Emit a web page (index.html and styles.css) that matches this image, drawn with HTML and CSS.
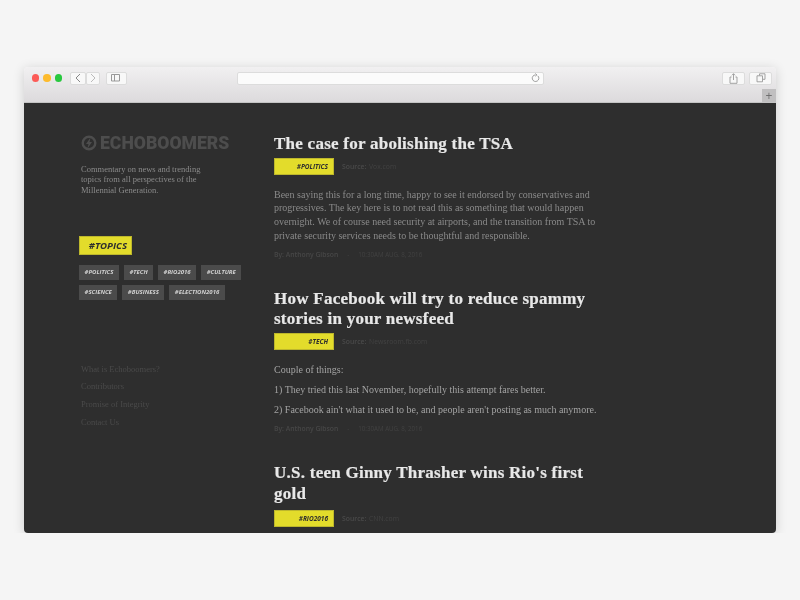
FILE: index.html
```html
<!DOCTYPE html>
<html lang="en">
<head>
    <meta charset="UTF-8">
    <title>Echoboomers</title>
    <link rel="stylesheet" href="styles.css">
</head>
<body>
    <div class="window">
        <div class="toolbar">
            <div class="toolbar-row">
                <div class="lights">
                    <span class="light red"></span>
                    <span class="light yellow"></span>
                    <span class="light green"></span>
                </div>
                <div class="btn-pair">
                    <div class="tool-btn back-btn">
                        <svg width="8" height="10" viewBox="0 0 8 10"><path d="M6 1 2 5l4 4" fill="none" stroke="#888" stroke-width="1"/></svg>
                    </div>
                    <div class="tool-btn forward-btn">
                        <svg width="8" height="10" viewBox="0 0 8 10"><path d="M2 1l4 4-4 4" fill="none" stroke="#bbb" stroke-width="1"/></svg>
                    </div>
                </div>
                <div class="tool-btn sidebar-btn">
                    <svg width="10" height="8" viewBox="0 0 10 8"><path d="M.5.5h8v6.500h-8zM3.500.5v6.500" fill="none" stroke="#999"/></svg>
                </div>
                <div class="address">
                    <svg width="9" height="10" viewBox="0 0 9 10"><path d="M6.800 2.800a3.300 3.300 0 1 1-2.300-.9M4.300.5l1.600 1.400-1.600 1.300" fill="none" stroke="#888" stroke-width=".8"/></svg>
                </div>
                <div class="tool-btn wide-btn">
                    <svg width="9" height="11" viewBox="0 0 9 11"><path d="M2.500 4H1v6.300h7V4H6.500M4.500 7V.8M2.900 2.300 4.500.7l1.600 1.600" fill="none" stroke="#999" stroke-width=".9"/></svg>
                </div>
                <div class="tool-btn wide-btn">
                    <svg width="10" height="10" viewBox="0 0 10 10"><path d="M3.500 2.500V.8h5.500v5.500H7M1 2.800h5.500v6H1z" fill="none" stroke="#999" stroke-width=".9"/></svg>
                </div>
            </div>
            <div class="tab-row">
                <div class="new-tab">+</div>
            </div>
        </div>

        <div class="page">
            <aside class="sidebar">
                <div class="logo">
                    <svg width="16" height="16" viewBox="0 0 16 16"><circle cx="8" cy="8" r="6.300" fill="none" stroke="#4d4d4d" stroke-width="2.400"/><path d="M9.500 2.500 5 9h2.500l-1 4.500L11 7H8.500z" fill="#4d4d4d"/></svg>
                    <span class="logo-text">ECHOBOOMERS</span>
                </div>
                <p class="tagline">Commentary on news and trending topics from all perspectives of the Millennial Generation.</p>
                <div class="topics-label">#TOPICS</div>
                <div class="topic-list">
                    <span class="topic">#POLITICS</span>
                    <span class="topic">#TECH</span>
                    <span class="topic">#RIO2016</span>
                    <span class="topic">#CULTURE</span>
                    <span class="topic">#SCIENCE</span>
                    <span class="topic">#BUSINESS</span>
                    <span class="topic">#ELECTION2016</span>
                </div>
                <ul class="side-links">
                    <li>What is Echoboomers?</li>
                    <li>Contributors</li>
                    <li>Promise of Integrity</li>
                    <li>Contact Us</li>
                </ul>
            </aside>

            <main class="feed">
                <article class="post">
                    <h2>The case for abolishing the TSA</h2>
                    <div class="post-meta">
                        <span class="post-tag">#POLITICS</span>
                        <span class="source"><b>Source:</b> Vox.com</span>
                    </div>
                    <div class="post-body">
                        <p>Been saying this for a long time, happy to see it endorsed by conservatives and progressives. The key here is to not read this as something that would happen overnight. We of course need security at airports, and the transition from TSA to private security services needs to be thoughtful and responsible.</p>
                    </div>
                    <div class="byline"><b>By: Anthony Gibson</b><i>-</i>10:30AM AUG. 8, 2016</div>
                </article>

                <article class="post">
                    <h2>How Facebook will try to reduce spammy stories in your newsfeed</h2>
                    <div class="post-meta">
                        <span class="post-tag">#TECH</span>
                        <span class="source"><b>Source:</b> Newsroom.fb.com</span>
                    </div>
                    <div class="post-body post-body-light">
                        <p>Couple of things:</p>
                        <p>1) They tried this last November, hopefully this attempt fares better.</p>
                        <p>2) Facebook ain't what it used to be, and people aren't posting as much anymore.</p>
                    </div>
                    <div class="byline"><b>By: Anthony Gibson</b><i>-</i>10:30AM AUG. 8, 2016</div>
                </article>

                <article class="post">
                    <h2>U.S. teen Ginny Thrasher wins Rio's first gold</h2>
                    <div class="post-meta">
                        <span class="post-tag">#RIO2016</span>
                        <span class="source"><b>Source:</b> CNN.com</span>
                    </div>
                </article>
            </main>
        </div>
    </div>
</body>
</html>
```

FILE: styles.css
```css
body {
    margin: 0;
    background-color: #f5f5f5;
    font-family: "Open Sans", sans-serif;
}
.window {
    width: 752px;
    height: 466px;
    margin: 67px auto 0;
    border-radius: 4px;
    overflow: hidden;
    box-shadow: 0 2px 12px rgba(0, 0, 0, 0.16);
    display: flex;
    flex-direction: column;
    filter: blur(0.3px);
}

/* browser chrome */
.toolbar {
    height: 36px;
    flex-shrink: 0;
    background: linear-gradient(#f1f0f1, #dcdadc);
    border-bottom: 1px solid #c4c4c4;
    box-sizing: border-box;
}
.toolbar-row {
    display: flex;
    align-items: center;
    height: 22px;
    padding-left: 7.500px;
}
.lights {
    display: flex;
    gap: 4px;
    margin-right: 7.500px;
}
.light {
    width: 7.500px;
    height: 7.500px;
    border-radius: 50%;
}
.red { background-color: #fc5b57; }
.yellow { background-color: #fdbb2e; }
.green { background-color: #28c83f; }
.btn-pair {
    display: flex;
    margin-right: 6px;
}
.tool-btn {
    display: flex;
    align-items: center;
    justify-content: center;
    height: 13px;
    box-sizing: border-box;
    background-color: #f8f8f8;
    border: 1px solid #dcdcdc;
    border-radius: 2px;
}
.back-btn { width: 16px; }
.forward-btn { width: 14px; }
.sidebar-btn { width: 22px; }
.wide-btn {
    width: 23px;
    margin-right: 4px;
}
.address {
    display: flex;
    align-items: center;
    justify-content: flex-end;
    width: 308px;
    height: 13px;
    box-sizing: border-box;
    margin-left: 110px;
    margin-right: 178px;
    padding-right: 3px;
    background-color: #fbfbfb;
    border: 1px solid #dcdcdc;
    border-radius: 2px;
}
.tab-row {
    display: flex;
    justify-content: flex-end;
    height: 13px;
}
.new-tab {
    width: 14px;
    height: 13px;
    background-color: #c0bfc0;
    color: #6f6f6f;
    font-size: 12px;
    line-height: 13px;
    text-align: center;
}

/* page */
.page {
    flex: 1;
    display: flex;
    background-color: #2e2e2e;
    overflow: hidden;
}
.sidebar {
    width: 250px;
    flex-shrink: 0;
    padding: 30.500px 0 0 55px;
    box-sizing: border-box;
}
.logo {
    display: flex;
    align-items: center;
    gap: 3px;
    margin-left: 2px;
    height: 18px;
}
.logo-text {
    font-family: Roboto, "Liberation Sans", sans-serif;
    font-weight: 900;
    font-size: 17.600px;
    color: #4d4d4d;
}
.tagline {
    width: 135px;
    margin: 12px 0 0 2px;
    font-family: "Liberation Serif", serif;
    font-size: 8.500px;
    line-height: 10.500px;
    color: #8a8a8a;
}
.topics-label {
    width: 53px;
    height: 19px;
    margin-top: 40.500px;
    box-sizing: border-box;
    padding-right: 4px;
    background-color: #e3dc2b;
    border: 1px solid #bdb72c;
    color: #2e2e2e;
    font-weight: bold;
    font-style: italic;
    font-size: 9.600px;
    line-height: 17px;
    text-align: right;
}
.topic-list {
    display: flex;
    flex-wrap: wrap;
    gap: 5px;
    margin-top: 10px;
    width: 170px;
}
.topic {
    height: 15px;
    padding: 0 5.500px;
    background-color: #4b4b4b;
    color: #d0d0d0;
    font-weight: bold;
    font-style: italic;
    font-size: 6px;
    line-height: 15px;
}
.side-links {
    list-style: none;
    margin: 61px 0 0 2px;
    padding: 0;
    font-family: "Liberation Serif", serif;
    font-size: 8.500px;
    line-height: 17.700px;
    color: #4a4a4a;
}
.feed {
    width: 325px;
    padding-top: 31px;
}
.post {
    margin-bottom: 30px;
}
.post h2 {
    margin: 0;
    font-family: "Liberation Serif", serif;
    font-weight: bold;
    font-size: 17px;
    line-height: 20.500px;
    letter-spacing: 0.250px;
    color: #e8e8e8;
    -webkit-text-stroke: 0.2px #e8e8e8;
}
.post-meta {
    display: flex;
    align-items: center;
    margin-top: 3px;
}
.post:last-child .post-meta {
    margin-top: 6px;
}
.post-tag {
    width: 60px;
    height: 17px;
    box-sizing: border-box;
    padding-right: 5px;
    background-color: #e3dc2b;
    border: 1px solid #bdb72c;
    color: #2e2e2e;
    font-weight: bold;
    font-style: italic;
    font-size: 6.500px;
    line-height: 15px;
    text-align: right;
}
.source {
    margin-left: 8px;
    font-size: 6.800px;
    color: #424242;
}
.source b {
    margin-right: 1px;
    font-weight: 600;
    color: #4a4a4a;
}
.post-body {
    margin-top: 13px;
    font-family: "Liberation Serif", serif;
    font-size: 10px;
    line-height: 13.700px;
    color: #8a8a8a;
}
.post-body-light {
    color: #a3a3a3;
}
.post-body p {
    margin: 0 0 6.500px;
}
.byline {
    margin-top: 7.500px;
    font-size: 6.200px;
    color: #424242;
}
.byline b {
    font-size: 6.800px;
    font-weight: 600;
    color: #474747;
}
.byline i {
    font-style: normal;
    margin: 0 9px;
}
```
